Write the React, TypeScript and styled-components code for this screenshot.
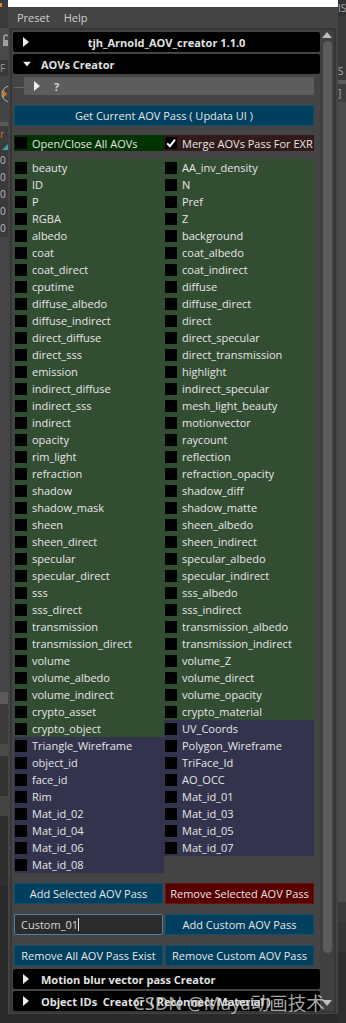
import React from "react";
import styled, { createGlobalStyle } from "styled-components";

const GlobalStyle = createGlobalStyle`
  html, body {
    margin: 0;
    padding: 0;
    background: #2a2a2a;
  }
  body {
    font-family: "Open Sans", "Noto Sans", sans-serif;
  }
`;

const LEFT_GREEN = [
  "beauty", "ID", "P", "RGBA", "albedo", "coat", "coat_direct", "cputime",
  "diffuse_albedo", "diffuse_indirect", "direct_diffuse", "direct_sss",
  "emission", "indirect_diffuse", "indirect_sss", "indirect", "opacity",
  "rim_light", "refraction", "shadow", "shadow_mask", "sheen", "sheen_direct",
  "specular", "specular_direct", "sss", "sss_direct", "transmission",
  "transmission_direct", "volume", "volume_albedo", "volume_indirect",
  "crypto_asset", "crypto_object",
];
const LEFT_PURPLE = [
  "Triangle_Wireframe", "object_id", "face_id", "Rim", "Mat_id_02",
  "Mat_id_04", "Mat_id_06", "Mat_id_08",
];
const RIGHT_GREEN = [
  "AA_inv_density", "N", "Pref", "Z", "background", "coat_albedo",
  "coat_indirect", "diffuse", "diffuse_direct", "direct", "direct_specular",
  "direct_transmission", "highlight", "indirect_specular", "mesh_light_beauty",
  "motionvector", "raycount", "reflection", "refraction_opacity", "shadow_diff",
  "shadow_matte", "sheen_albedo", "sheen_indirect", "specular_albedo",
  "specular_indirect", "sss_albedo", "sss_indirect", "transmission_albedo",
  "transmission_indirect", "volume_Z", "volume_direct", "volume_opacity",
  "crypto_material",
];
const RIGHT_PURPLE = [
  "UV_Coords", "Polygon_Wireframe", "TriFace_Id", "AO_OCC", "Mat_id_01",
  "Mat_id_03", "Mat_id_05", "Mat_id_07",
];

const Screen = styled.div`
  position: relative;
  display: flex;
  width: 346px;
  height: 1023px;
  overflow: hidden;
  background: #2a2a2a;
`;

/* maya viewport bits peeking out at the sides */
const Strip = styled.div`
  width: 8px;
  height: 1023px;
  display: flex;
  flex-direction: column;
  flex-shrink: 0;
  overflow: hidden;
`;

const Band = styled.div<{ $h: number; $bg: string; $color?: string }>`
  height: ${(p) => p.$h}px;
  flex-shrink: 0;
  background: ${(p) => p.$bg};
  color: ${(p) => p.$color || "#bdbdbd"};
  font-size: 10px;
  line-height: ${(p) => p.$h}px;
  overflow: hidden;
  white-space: nowrap;
  display: flex;
  align-items: center;
`;

const Window = styled.div`
  width: 330px;
  height: 1014px;
  flex-shrink: 0;
  display: flex;
  flex-direction: column;
  background: #444444;
`;

const TitleBar = styled.div`
  height: 7px;
  background: #ffffff;
`;

const MenuBar = styled.div`
  height: 21px;
  display: flex;
  align-items: center;
  gap: 14px;
  padding-left: 9px;
  font-size: 11px;
  color: #cfcfcf;
`;

const ScrollFrame = styled.div`
  margin-left: 2px;
  width: 322px;
  height: 981px;
  border: 2px solid #363636;
  display: flex;
  overflow: hidden;
`;

const Content = styled.div`
  width: 308px;
  padding: 2px 0 0 1px;
  display: flex;
  flex-direction: column;
  overflow: hidden;
`;

const FrameBar = styled.div<{ $centered?: boolean; $top?: number }>`
  position: relative;
  height: 20px;
  flex-shrink: 0;
  margin-top: ${(p) => p.$top ?? 0}px;
  background: #000000;
  border-radius: 2px;
  display: flex;
  align-items: center;
  justify-content: ${(p) => (p.$centered ? "center" : "flex-start")};
  padding-left: ${(p) => (p.$centered ? 0 : 28)}px;
  color: #e2e2e2;
  font-size: 11px;
  font-weight: 700;
  white-space: nowrap;
  svg {
    position: absolute;
    left: 10px;
    top: 50%;
    transform: translateY(-50%);
  }
`;

const SubBar = styled.div`
  position: relative;
  height: 20px;
  margin: 3px 0 0 11px;
  width: 290px;
  background: #5d5d5d;
  border-radius: 2px;
  display: flex;
  align-items: center;
  gap: 14px;
  padding-left: 10px;
  box-sizing: border-box;
  color: #cfcfcf;
  font-size: 11px;
  font-weight: 700;
  &::before {
    content: "";
    position: absolute;
    left: -10px;
    top: 10px;
    width: 10px;
    height: 1px;
    background: #6a6a6a;
  }
`;

const Section = styled.div`
  margin-left: 1px;
  width: 300px;
  display: flex;
  flex-direction: column;
`;

const Button = styled.div<{ $tone?: "blue" | "red"; $top?: number }>`
  height: 21px;
  margin-top: ${(p) => p.$top ?? 0}px;
  background: ${(p) => (p.$tone === "red" ? "#580000" : "#003f5e")};
  border: 1px solid ${(p) => (p.$tone === "red" ? "#6a1010" : "#0f4d6c")};
  box-sizing: border-box;
  border-radius: 1px;
  display: flex;
  align-items: center;
  justify-content: center;
  color: #e6e6e6;
  font-size: 11px;
  white-space: nowrap;
`;

const ToggleRow = styled.div`
  margin-top: 9px;
  display: grid;
  grid-template-columns: 150px 150px;
  height: 16px;
`;

const ToggleCell = styled.div<{ $bg: string }>`
  background: ${(p) => p.$bg};
  display: flex;
  align-items: center;
  gap: 5px;
  padding-left: 1px;
  color: #e6e6e6;
  font-size: 11px;
  white-space: nowrap;
  overflow: hidden;
`;

const Grid = styled.div`
  margin-top: 8px;
  display: grid;
  grid-template-columns: 150px 150px;
  align-items: start;
`;

const Column = styled.div`
  display: flex;
  flex-direction: column;
`;

const AovItem = styled.div<{ $tone: "green" | "purple" }>`
  height: 17px;
  display: flex;
  align-items: center;
  gap: 5px;
  padding-left: 1px;
  background: ${(p) => (p.$tone === "green" ? "#334d33" : "#33334d")};
  color: #e6e6e6;
  font-size: 11px;
  white-space: nowrap;
`;

const Box = styled.span`
  width: 12px;
  height: 12px;
  flex-shrink: 0;
  background: #000000;
  display: flex;
  align-items: center;
  justify-content: center;
`;

const ButtonRow = styled.div<{ $top: number }>`
  margin-top: ${(p) => p.$top}px;
  display: grid;
  grid-template-columns: 149px 149px;
  column-gap: 2px;
`;

const TextField = styled.div`
  height: 21px;
  box-sizing: border-box;
  border: 1px solid #4f7fa3;
  border-radius: 2px;
  background: #2b2b2b;
  display: flex;
  align-items: center;
  padding-left: 6px;
  color: #d6d6d6;
  font-size: 11px;
`;

const Caret = styled.span`
  display: inline-block;
  width: 1px;
  height: 13px;
  background: #e0e0e0;
`;

const ScrollBar = styled.div`
  width: 14px;
  display: flex;
  flex-direction: column;
  align-items: center;
  background: #404040;
`;

const ArrowSlot = styled.div`
  height: 9px;
  display: flex;
  align-items: center;
  justify-content: center;
  flex-shrink: 0;
`;

const Thumb = styled.div`
  width: 9px;
  height: 912px;
  margin-top: 2px;
  border-radius: 5px;
  background: #5c5c5c;
`;

const Watermark = styled.div`
  position: absolute;
  left: 133px;
  top: 989px;
  font-family: "Noto Sans", "Noto Sans CJK SC", sans-serif;
  font-size: 18.5px;
  color: rgba(215, 215, 215, 0.78);
  white-space: nowrap;
`;

const TriRight = () => (
  <svg width="6" height="10" viewBox="0 0 6 10">
    <path d="M0 0 L6 5 L0 10 Z" fill="#ececec" />
  </svg>
);

const TriDown = () => (
  <svg width="8" height="5" viewBox="0 0 8 5">
    <path d="M0 0 L8 0 L4 5 Z" fill="#ececec" />
  </svg>
);

const Tick = () => (
  <svg width="12" height="12" viewBox="0 0 12 12">
    <path d="M2.2 6.4 L4.9 9.2 L10 2.6" stroke="#ffffff" strokeWidth="2" fill="none" />
  </svg>
);

const Check = ({ label, checked }: { label: string; checked?: boolean }) => (
  <>
    <Box>{checked && <Tick />}</Box>
    <span>{label}</span>
  </>
);

const LeftStrip = () => (
  <Strip>
    <Band $h={28} $bg="#3a3a3a">
      <svg width="8" height="28" viewBox="0 0 8 28">
        <rect x="0" y="3" width="2" height="4" fill="#d08a2c" />
      </svg>
    </Band>
    <Band $h={32} $bg="#4a4a4a">
      <svg width="8" height="32" viewBox="0 0 8 32">
        <path d="M4 12 V8 a3 3 0 0 1 4 0" stroke="#a0a0a0" strokeWidth="1.5" fill="none" />
        <rect x="3" y="12" width="5" height="6" fill="#a0a0a0" />
      </svg>
    </Band>
    <Band $h={16} $bg="#383838" $color="#9a9a9a">F</Band>
    <Band $h={46} $bg="#444444">
      <svg width="8" height="46" viewBox="0 0 8 46">
        <circle cx="10" cy="18" r="8" stroke="#b0b0b0" strokeWidth="1" fill="none" />
        <path d="M3 14 L7 18 L3 22 Z" fill="#d07a20" />
      </svg>
    </Band>
    <Band $h={4} $bg="#5a5a5a" />
    <Band $h={16} $bg="#3c3c3c" $color="#d07a20">r</Band>
    <Band $h={10} $bg="#3c3c3c">
      <svg width="8" height="10" viewBox="0 0 8 10">
        <path d="M2 8 L8 2 L8 8 Z" fill="#3aa0b0" />
      </svg>
    </Band>
    <Band $h={17} $bg="#3a3a3a">0</Band>
    <Band $h={17} $bg="#3a3a3a">0</Band>
    <Band $h={17} $bg="#3a3a3a">0</Band>
    <Band $h={17} $bg="#3a3a3a">0</Band>
    <Band $h={17} $bg="#3a3a3a">0</Band>
    <Band $h={455} $bg="#454545" />
    <Band $h={12} $bg="#5a5a5a" />
    <Band $h={40} $bg="#3a3a3a" />
    <Band $h={12} $bg="#4a4a4a" />
    <Band $h={40} $bg="#333333" />
    <Band $h={20} $bg="#444444" />
    <Band $h={70} $bg="#2e2e2e" />
  </Strip>
);

const RightStrip = () => (
  <Strip>
    <Band $h={16} $bg="#333333" $color="#a8a8a8">IS</Band>
    <Band $h={46} $bg="#3a3a3a" />
    <Band $h={18} $bg="#3a3a3a" $color="#a8a8a8">S</Band>
    <Band $h={4} $bg="#5a5a5a" />
    <Band $h={18} $bg="#3d3d3d" $color="#a8a8a8">]</Band>
    <Band $h={800} $bg="#4c4c4c" />
    <Band $h={20} $bg="#3a3a3a" />
    <Band $h={30} $bg="#353535" />
    <Band $h={71} $bg="#2e2e2e" />
  </Strip>
);

export default function App() {
  return (
    <Screen>
      <GlobalStyle />
      <LeftStrip />
      <Window>
        <TitleBar />
        <MenuBar>
          <span>Preset</span>
          <span>Help</span>
        </MenuBar>
        <ScrollFrame>
          <Content>
            <FrameBar $centered>
              <TriRight />
              tjh_Arnold_AOV_creator 1.1.0
            </FrameBar>
            <FrameBar $top={2}>
              <TriDown />
              AOVs Creator
            </FrameBar>
            <SubBar>
              <TriRight />
              <span>?</span>
            </SubBar>
            <Section>
              <Button $top={10}>Get Current AOV Pass ( Updata UI )</Button>
              <ToggleRow>
                <ToggleCell $bg="#003300">
                  <Check label="Open/Close All AOVs" />
                </ToggleCell>
                <ToggleCell $bg="#311a1a">
                  <Check label="Merge AOVs Pass For EXR" checked />
                </ToggleCell>
              </ToggleRow>
              <Grid>
                <Column>
                  {LEFT_GREEN.map((n) => (
                    <AovItem key={n} $tone="green">
                      <Check label={n} />
                    </AovItem>
                  ))}
                  {LEFT_PURPLE.map((n) => (
                    <AovItem key={n} $tone="purple">
                      <Check label={n} />
                    </AovItem>
                  ))}
                </Column>
                <Column>
                  {RIGHT_GREEN.map((n) => (
                    <AovItem key={n} $tone="green">
                      <Check label={n} />
                    </AovItem>
                  ))}
                  {RIGHT_PURPLE.map((n) => (
                    <AovItem key={n} $tone="purple">
                      <Check label={n} />
                    </AovItem>
                  ))}
                </Column>
              </Grid>
              <ButtonRow $top={10}>
                <Button>Add Selected AOV Pass</Button>
                <Button $tone="red">Remove Selected AOV Pass</Button>
              </ButtonRow>
              <ButtonRow $top={10}>
                <TextField>
                  Custom_01
                  <Caret />
                </TextField>
                <Button>Add Custom AOV Pass</Button>
              </ButtonRow>
              <ButtonRow $top={10}>
                <Button>Remove All AOV Pass Exist</Button>
                <Button>Remove Custom AOV Pass</Button>
              </ButtonRow>
            </Section>
            <FrameBar $top={3}>
              <TriRight />
              Motion blur vector pass Creator
            </FrameBar>
            <FrameBar $top={2}>
              <TriRight />
              Object IDs&nbsp; Creator&nbsp; ( Reconnect Material )
            </FrameBar>
          </Content>
          <ScrollBar>
            <ArrowSlot>
              <svg width="10" height="6" viewBox="0 0 10 6">
                <path d="M0 6 L5 0 L10 6 Z" fill="#bdbdbd" />
              </svg>
            </ArrowSlot>
            <Thumb />
            <div style={{ flex: 1 }} />
            <ArrowSlot>
              <svg width="10" height="6" viewBox="0 0 10 6">
                <path d="M0 0 L10 0 L5 6 Z" fill="#bdbdbd" />
              </svg>
            </ArrowSlot>
            <div style={{ height: 4 }} />
          </ScrollBar>
        </ScrollFrame>
      </Window>
      <RightStrip />
      <Watermark>CSDN @Maya动画技术</Watermark>
    </Screen>
  );
}
